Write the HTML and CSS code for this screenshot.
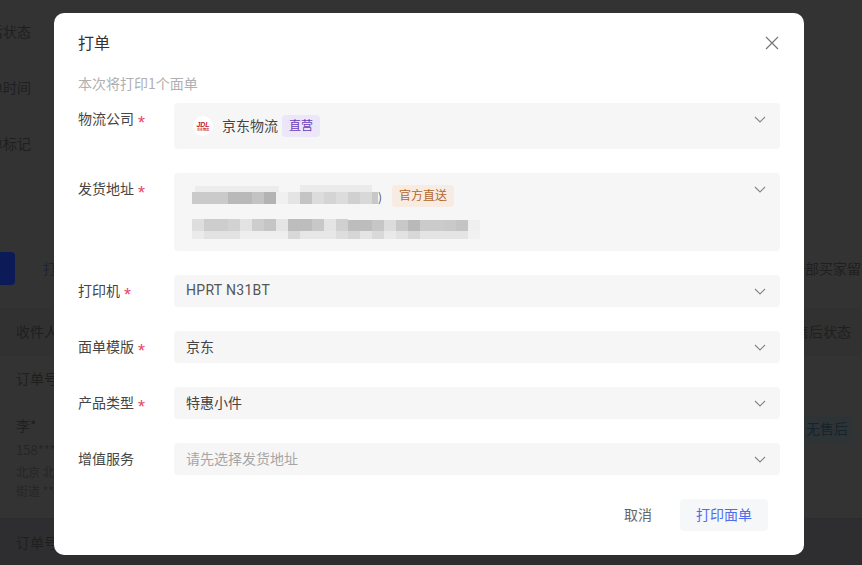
FILE: index.html
```html
<!DOCTYPE html>
<html lang="zh-CN">
<head>
<meta charset="utf-8">
<title>打单</title>
<link rel="stylesheet" href="styles.css">
</head>
<body>
<main class="page">
  <section class="filters">
    <div class="filter-row"><span class="filter-label">售后状态</span></div>
    <div class="filter-row"><span class="filter-label">下单时间</span></div>
    <div class="filter-row"><span class="filter-label">订单标记</span></div>
  </section>
  <section class="toolbar">
    <span class="primary-stub"></span>
    <span class="tool-link">打单</span>
    <span class="tool-right">全部买家留言</span>
  </section>
  <section class="table">
    <div class="table-head"><span>收件人</span><span>售后状态</span></div>
    <div class="order-no">订单号</div>
    <div class="order-body">
      <div class="receiver">
        <div class="receiver-name">李*</div>
        <div class="receiver-phone">158****</div>
        <div class="receiver-addr">北京 北京</div>
        <div class="receiver-addr">街道 ***</div>
      </div>
      <span class="after-sale">无售后</span>
    </div>
    <div class="order-no order-next">订单号</div>
  </section>
</main>

<div class="overlay">
  <div class="modal" role="dialog" aria-label="打单">
    <header class="modal-head">
      <h1 class="modal-title">打单</h1>
      <svg class="close" width="14" height="14" viewBox="0 0 14 14" aria-label="关闭"><path d="M1 1 13 13M13 1 1 13"/></svg>
    </header>
    <p class="modal-sub">本次将打印1个面单</p>
    <form class="form">
      <div class="form-item">
        <label class="form-label">物流公司<i class="req">*</i></label>
        <div class="field field-rich">
          <div class="line line-carrier">
            <svg class="logo" width="20" height="20" viewBox="0 0 20 20">
              <circle cx="10" cy="10" r="10" fill="#fff"/>
              <text x="10" y="10.8" class="logo-main">JDL</text>
              <text x="10" y="14.6" class="logo-sub">京东物流</text>
            </svg>
            <span class="carrier-name">京东物流</span>
            <span class="tag tag-purple">直营</span>
          </div>
          <svg class="chev" width="12" height="7" viewBox="0 0 12 7"><path d="M1 1 6 6 11 1"/></svg>
        </div>
      </div>
      <div class="form-item">
        <label class="form-label">发货地址<i class="req">*</i></label>
        <div class="field field-rich">
          <div class="addr">
            <div class="line line-addr">
              <svg class="mosaic" width="186" height="22" viewBox="0 0 186 22">
                <rect x="3" y="1" width="84" height="6" fill="#ececec"/>
                <rect x="108" y="0" width="72" height="7" fill="#ebebeb"/>
                <rect x="0" y="7" width="36" height="12" fill="#cacaca"/>
                <rect x="36" y="7" width="24" height="12" fill="#b9b9b9"/>
                <rect x="60" y="7" width="12" height="12" fill="#c3c3c3"/>
                <rect x="72" y="7" width="12" height="12" fill="#b3b3b3"/>
                <rect x="84" y="7" width="12" height="12" fill="#f0f0f0"/>
                <rect x="96" y="7" width="12" height="12" fill="#e4e4e4"/>
                <rect x="108" y="7" width="12" height="12" fill="#c4c4c4"/>
                <rect x="120" y="7" width="12" height="12" fill="#dcdcdc"/>
                <rect x="132" y="7" width="12" height="12" fill="#d4d4d4"/>
                <rect x="144" y="7" width="12" height="12" fill="#dcdcdc"/>
                <rect x="156" y="7" width="12" height="12" fill="#d0d0d0"/>
                <rect x="168" y="7" width="12" height="12" fill="#d8d8d8"/>
                <rect x="180" y="7" width="6" height="12" fill="#c8c8c8"/>
              </svg>
              <span class="addr-end">)</span>
              <span class="tag tag-orange">官方直送</span>
            </div>
            <svg class="mosaic" width="288" height="22" viewBox="0 0 288 22">
              <rect x="0" y="2" width="12" height="12" fill="#dedede"/>
              <rect x="12" y="2" width="24" height="12" fill="#cdcdcd"/>
              <rect x="36" y="2" width="12" height="12" fill="#d2d2d2"/>
              <rect x="48" y="2" width="12" height="12" fill="#e3e3e3"/>
              <rect x="60" y="2" width="12" height="12" fill="#cdcdcd"/>
              <rect x="72" y="2" width="12" height="12" fill="#c5c5c5"/>
              <rect x="84" y="2" width="12" height="12" fill="#e5e5e5"/>
              <rect x="96" y="2" width="24" height="12" fill="#bdbdbd"/>
              <rect x="120" y="2" width="12" height="12" fill="#c8c8c8"/>
              <rect x="132" y="2" width="12" height="12" fill="#e4e4e4"/>
              <rect x="144" y="2" width="12" height="12" fill="#d0d0d0"/>
              <rect x="156" y="3" width="24" height="11" fill="#bdbdbd"/>
              <rect x="180" y="3" width="12" height="11" fill="#c6c6c6"/>
              <rect x="192" y="3" width="12" height="11" fill="#dcdcdc"/>
              <rect x="204" y="3" width="12" height="11" fill="#c8c8c8"/>
              <rect x="216" y="3" width="12" height="11" fill="#b9b9b9"/>
              <rect x="228" y="3" width="24" height="11" fill="#cbcbcb"/>
              <rect x="252" y="3" width="12" height="11" fill="#c9c9c9"/>
              <rect x="264" y="3" width="12" height="11" fill="#c4c4c4"/>
              <rect x="276" y="3" width="12" height="11" fill="#efefef"/>
              <rect x="0" y="14" width="12" height="8" fill="#ebebeb"/>
              <rect x="12" y="14" width="36" height="10" fill="#e2e2e2"/>
              <rect x="48" y="14" width="48" height="8" fill="#eeeeee"/>
              <rect x="96" y="14" width="12" height="8" fill="#d8d8d8"/>
              <rect x="108" y="14" width="36" height="8" fill="#e7e7e7"/>
              <rect x="144" y="14" width="12" height="8" fill="#dddddd"/>
              <rect x="156" y="14" width="12" height="8" fill="#d6d6d6"/>
              <rect x="168" y="14" width="12" height="8" fill="#e4e4e4"/>
              <rect x="180" y="14" width="12" height="8" fill="#d9d9d9"/>
              <rect x="192" y="14" width="12" height="8" fill="#e9e9e9"/>
              <rect x="204" y="14" width="12" height="8" fill="#e2e2e2"/>
              <rect x="216" y="14" width="12" height="8" fill="#d8d8d8"/>
              <rect x="228" y="14" width="48" height="8" fill="#e4e4e4"/>
              <rect x="276" y="14" width="12" height="8" fill="#f1f1f1"/>
            </svg>
          </div>
          <svg class="chev" width="12" height="7" viewBox="0 0 12 7"><path d="M1 1 6 6 11 1"/></svg>
        </div>
      </div>
      <div class="form-item">
        <label class="form-label">打印机<i class="req">*</i></label>
        <div class="field"><span class="value value-latin">HPRT N31BT</span><svg class="chev" width="12" height="7" viewBox="0 0 12 7"><path d="M1 1 6 6 11 1"/></svg></div>
      </div>
      <div class="form-item">
        <label class="form-label">面单模版<i class="req">*</i></label>
        <div class="field"><span class="value">京东</span><svg class="chev" width="12" height="7" viewBox="0 0 12 7"><path d="M1 1 6 6 11 1"/></svg></div>
      </div>
      <div class="form-item">
        <label class="form-label">产品类型<i class="req">*</i></label>
        <div class="field"><span class="value">特惠小件</span><svg class="chev" width="12" height="7" viewBox="0 0 12 7"><path d="M1 1 6 6 11 1"/></svg></div>
      </div>
      <div class="form-item">
        <label class="form-label">增值服务</label>
        <div class="field"><span class="value placeholder">请先选择发货地址</span><svg class="chev" width="12" height="7" viewBox="0 0 12 7"><path d="M1 1 6 6 11 1"/></svg></div>
      </div>
    </form>
    <footer class="modal-foot">
      <button type="button" class="btn btn-cancel">取消</button>
      <button type="button" class="btn btn-primary">打印面单</button>
    </footer>
  </div>
</div>
</body>
</html>
```

FILE: styles.css
```css
* { box-sizing: border-box; }
html, body { margin: 0; height: 100%; }
body {
  background: #333;
  font-family: "Noto Sans CJK SC", "Noto Sans", sans-serif;
  font-size: 14px;
  overflow: hidden;
}

/* dimmed page behind the dialog */
.page { height: 565px; overflow: hidden; color: #1f1f1f; padding-top: 4px; }
.filters { margin-bottom: 80px; }
.filter-row { height: 56px; display: flex; align-items: center; }
.filter-label { width: 31px; height: 20px; line-height: 18px; display: flex; justify-content: flex-end; white-space: nowrap; overflow: hidden; }
.toolbar { height: 33px; display: flex; align-items: center; margin-bottom: 23px; }
.primary-stub { width: 15px; height: 33px; background: #0c1a58; border-radius: 0 4px 4px 0; margin-right: 28px; }
.tool-link { color: #1c2436; padding-bottom: 2px; }
.tool-right { margin-left: auto; margin-right: -13px; white-space: nowrap; flex-shrink: 0; padding-bottom: 2px; }
.table-head { height: 48px; display: flex; align-items: center; justify-content: space-between; padding: 0 11px 2px 16px; background: #313131; }
.order-no { height: 46px; display: flex; align-items: center; padding: 0 0 2px 16px; }
.order-next { height: 48px; border-top: 1px solid #2c2c2c; background: #2e2e30; }
.order-body { height: 116px; display: flex; justify-content: space-between; padding: 13px 9px 0 16px; }
.receiver-name { line-height: 20px; margin-bottom: 5px; }
.receiver-phone { line-height: 20px; margin-bottom: 2px; font-size: 13px; color: #262626; }
.receiver-addr { line-height: 19px; font-size: 12px; color: #262626; }
.after-sale { height: 28px; line-height: 26px; padding: 0 5px; background: #2e3436; color: #15232c; border-radius: 4px; }

/* dialog */
.overlay { position: fixed; inset: 0; display: flex; justify-content: center; align-items: flex-start; padding: 13px 4px 0 0; }
.modal { width: 750px; height: 542px; background: #fff; border-radius: 10px; padding: 0 24px; color: #444; }
.modal-head { height: 60px; display: flex; align-items: center; justify-content: space-between; }
.modal-title { margin: 0 0 2px; font-size: 16px; font-weight: 400; color: #333; }
.close { fill: none; stroke: #777; stroke-width: 1.2; margin-right: 1px; }
.modal-sub { margin: 0 0 8px; height: 22px; line-height: 20px; color: #b0b0b0; }
.form { display: flex; flex-direction: column; gap: 24px; }
.form-item { display: flex; }
.form-label { width: 96px; flex-shrink: 0; height: 32px; line-height: 30px; color: #444; }
.req { font: 18px/1 "Liberation Sans", sans-serif; color: #e8436a; margin-left: 4px; vertical-align: -5px; }
.field { flex: 1; min-height: 32px; background: #f6f6f6; border-radius: 4px; display: flex; justify-content: space-between; align-items: center; padding: 0 14px 0 12px; }
.field-rich { align-items: flex-start; padding: 12px 14px 12px 18px; }
.value { color: #444; padding-bottom: 2px; }
.value-latin { font-family: Roboto, "Noto Sans CJK SC", sans-serif; color: #555; letter-spacing: .3px; }
.placeholder { color: #a6a6a6; }
.chev { fill: none; stroke: #888; stroke-width: 1.2; flex-shrink: 0; }
.field-rich .chev { margin-top: 1px; }
.line { display: flex; align-items: center; height: 22px; }
.line-carrier { margin-left: 1px; }
.logo { margin-right: 9px; }
.logo-main { font: italic 700 7px "Liberation Sans", sans-serif; fill: #c8161d; text-anchor: middle; }
.logo-sub { font: 700 3px "Noto Sans CJK SC", sans-serif; fill: #c8161d; text-anchor: middle; }
.carrier-name { margin-right: 4px; color: #444; padding-bottom: 2px; }
.tag { height: 22px; line-height: 20px; padding: 0 7px; border-radius: 4px; font-size: 12px; }
.tag-purple { background: #ebe6f8; color: #6a3db8; }
.tag-orange { background: #f8ebe2; color: #b5651d; }
.addr { display: flex; flex-direction: column; gap: 10px; }
.mosaic { display: block; filter: blur(.4px); }
.addr-end { width: 14px; font-size: 12px; color: #555; }
.modal-foot { display: flex; justify-content: flex-end; gap: 12px; margin-top: 24px; padding-right: 12px; }
.btn { height: 32px; padding: 0 16px 2px; border: 0; border-radius: 4px; font: inherit; background: transparent; }
.btn-cancel { color: #666; }
.btn-primary { background: #f6f7f9; color: #4d6cf0; }
```
